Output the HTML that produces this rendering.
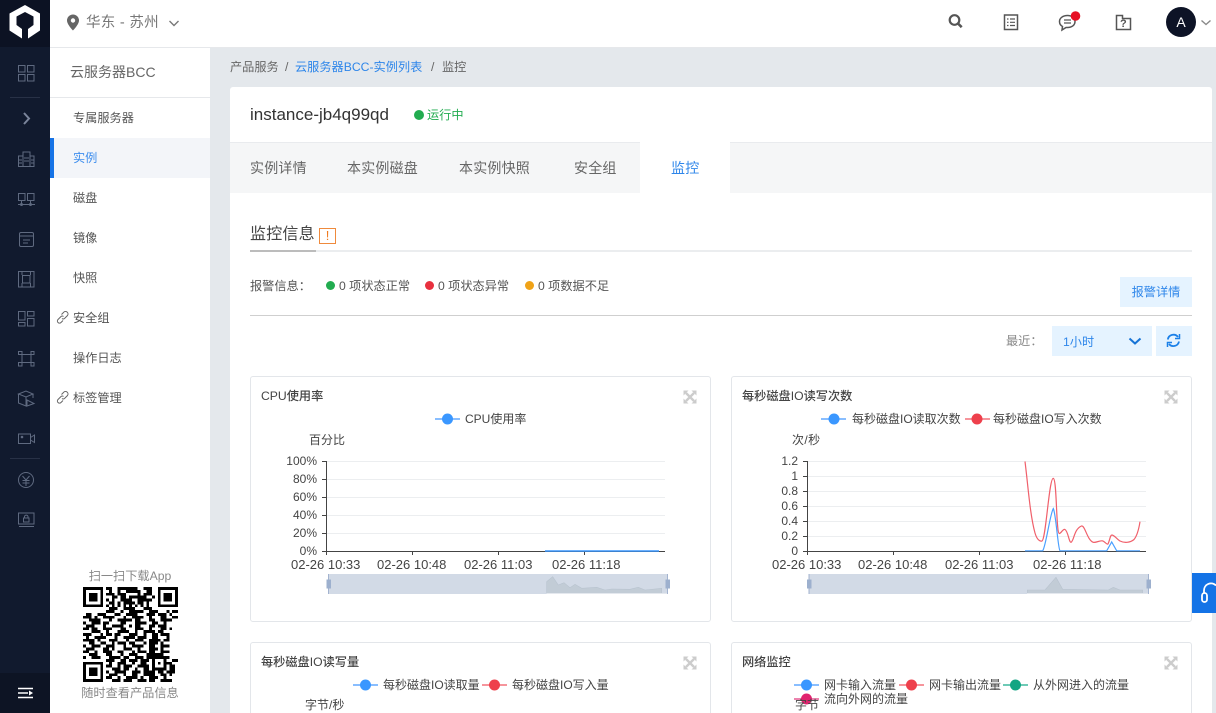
<!DOCTYPE html>
<html lang="zh"><head><meta charset="utf-8"><title>监控</title>
<style>
html,body{margin:0;padding:0;width:1216px;height:713px;overflow:hidden;background:#e4e8ec;font-family:"Liberation Sans","Noto Sans CJK SC",sans-serif;color:#555}
#root{position:absolute;left:0;top:0;width:1216px;height:713px;overflow:hidden;background:#e4e8ec}
.a{position:absolute}
.t{position:absolute;white-space:nowrap;line-height:20px;height:20px}
.m{font-size:12.2px;color:#555}
.card{position:absolute;background:#fff;border:1px solid #e3e6ea;border-radius:3px;box-sizing:border-box}
.ct{font-size:12.2px;color:#444;font-weight:500}
.lg{font-size:12px;color:#444}
.ax{font-size:12px;color:#444}
.ax2{font-size:13px;color:#444}
.tab{font-size:14px;letter-spacing:.2px;color:#666}
</style></head><body><div id="root">
<!-- dark rail -->
<div class="a" style="left:0;top:0;width:50px;height:713px;background:#111a2e"></div>
<div class="a" style="left:0;top:0;width:50px;height:47px;background:#0c1223"></div>
<div class="a" style="left:0;top:673px;width:50px;height:40px;background:#0d1424"></div>
<svg class="a" style="left:0;top:0" width="50" height="713" fill="none" stroke="#5f6a80" stroke-width="1">
<path d="M25 5L40 13.500V30.500L28 38.500V29L33.500 25V16.500L25 12L16.500 16.500V25L22 29V38.500L9.500 30.500V13.500Z" fill="#fff" stroke="none"/>
<path d="M10 97.500H40M10 458.500H40" stroke="#283146"/>
<rect x="18.500" y="65.500" width="6.500" height="6.500"/><rect x="27.500" y="65.500" width="6.500" height="6.500"/><rect x="18.500" y="74.500" width="6.500" height="6.500"/><rect x="27.500" y="74.500" width="6.500" height="6.500"/>
<path d="M24 113l5 5.500-5 5.500" stroke="#7b859b" stroke-width="2"/>
<path d="M18.500 166.500V156H23V152H30V156H34V166.500ZM23 156V166.500M30 156V166.500M19 160H22M19 163H22M24 158H29M24 161H29M31 160H34M31 163H34"/>
<rect x="18.500" y="193.500" width="6.500" height="7"/><rect x="27.500" y="193.500" width="6.500" height="7"/><path d="M21.500 200.500V204M30.500 200.500V204M18 204.500H35" /><circle cx="21.500" cy="204.500" r="1" fill="#5f6a80"/><circle cx="30.500" cy="204.500" r="1" fill="#5f6a80"/>
<rect x="19.500" y="232.500" width="14" height="14" rx="1.500"/><path d="M20 236H33M23 240H30M23 243H28"/>
<rect x="18.500" y="271.500" width="15.500" height="15.500"/><rect x="22.500" y="275.500" width="7.500" height="7.500"/><path d="M22 271.500V275M30.500 271.500V275M22 283V287M30.500 283V287"/>
<rect x="18.500" y="311.500" width="6.500" height="8.500"/><rect x="27.500" y="311.500" width="6.500" height="4.500"/><rect x="18.500" y="322.500" width="6.500" height="3.500"/><rect x="27.500" y="318.500" width="6.500" height="7.500"/>
<path d="M22 354.500H31V362.500H22ZM22 354.500V351.500H18.500V354.500H22M31 354.500V351.500H34V354.500H31M22 362.500V366H18.500V362.500H22M31 362.500V366H34V362.500H31"/>
<path d="M18.500 394L26 391L33 394L26 397ZM18.500 394V403L26 406V397M33 394V398M27 400L34 403.500L27 406Z"/>
<rect x="18.500" y="434" width="12" height="9.500"/><path d="M30.500 437.500L34.500 435V442.500L30.500 440"/><circle cx="22" cy="437" r=".8" fill="#5f6a80"/>
<circle cx="26" cy="480" r="7.500"/><path d="M22.500 476L26 480L29.500 476M22.500 480.500H29.500M22.500 483H29.500M26 480V486"/>
<rect x="18.500" y="513" width="15.500" height="11"/><path d="M19 526.500H34"/><rect x="23.500" y="518" width="5.500" height="4"/><path d="M24.500 518V516.500A1.800 1.800 0 0 1 28 516.500V518"/>
<path d="M18 688.500H33M18 693H28M18 697.500H33" stroke="#fff" stroke-width="1.500"/><path d="M29 690.500L33 693L29 695.500Z" fill="#fff" stroke="none"/>
</svg>
<!-- top bar -->
<div class="a" style="left:50px;top:0;width:1166px;height:47px;background:#fff;border-bottom:1px solid #e6e8eb"></div>
<svg class="a" style="left:66px;top:14px" width="14" height="18"><path d="M7 0.500A6 6 0 0 0 1 6.500C1 10.500 7 16.500 7 16.500S13 10.500 13 6.500A6 6 0 0 0 7 .500Z" fill="#666"/><circle cx="7" cy="6.500" r="2.200" fill="#fff"/></svg>
<div class="t" style="left:86px;top:13px;font-size:14.500px;color:#777;letter-spacing:.3px">华东 - 苏州</div>
<svg class="a" style="left:168px;top:20px" width="12" height="8" fill="none" stroke="#777" stroke-width="1.400"><path d="M1.500 1l4.500 4.500L10.500 1"/></svg>
<svg class="a" style="left:945px;top:10px" width="20" height="20" fill="none" stroke="#555" stroke-width="2.200"><circle cx="9.500" cy="10" r="4.800"/><path d="M13 13.500l3.700 3.700" stroke-width="2.600"/></svg>
<svg class="a" style="left:1003px;top:14px" width="16" height="17" fill="none" stroke="#555" stroke-width="1.500"><rect x="1.500" y="1" width="13" height="14.500"/><path d="M4 5H5.500M7 5H12M4 8.300H5.500M7 8.300H12M4 11.500H5.500M7 11.500H12" stroke-width="1.200"/></svg>
<svg class="a" style="left:1058px;top:10px" width="24" height="22" fill="none" stroke="#555" stroke-width="1.500"><path d="M9.500 5.500C5 5.500 1.500 8 1.500 11.500C1.500 13.700 2.700 15.500 4.500 16.500L4 20L8 17.500C8.500 17.500 9 17.500 9.500 17.500C14 17.500 17 15 17 11.500S14 5.500 9.500 5.500Z"/><path d="M6 10H13M6 13H13" stroke-width="1.200"/><circle cx="17.500" cy="6" r="4.800" fill="#e60f23" stroke="none"/></svg>
<svg class="a" style="left:1115px;top:14px" width="17" height="17" fill="none" stroke="#555" stroke-width="1.500"><path d="M1.500 15.500V1.500H7.500V4.500H15.500V15.500Z"/></svg>
<div class="t" style="left:1120px;top:17px;font-size:11px;font-weight:700;color:#555;line-height:14px;height:14px">?</div>
<div class="a" style="left:1166px;top:7px;width:30px;height:30px;border-radius:50%;background:#0d1326;color:#fff;text-align:center;line-height:30px;font-size:14px">A</div>
<svg class="a" style="left:1200px;top:19px" width="12" height="8" fill="none" stroke="#888" stroke-width="1.400"><path d="M1.500 1.500l4.500 4 4.500-4"/></svg>
<!-- sub menu -->
<div class="a" style="left:50px;top:48px;width:160px;height:665px;background:#fff"></div>
<div class="a" style="left:50px;top:97px;width:160px;height:1px;background:#e6e8eb"></div>
<div class="t" style="left:70px;top:62px;font-size:14px;color:#666">云服务器BCC</div>
<div class="a" style="left:50px;top:138px;width:160px;height:40px;background:#f3f5f9"></div>
<div class="a" style="left:50px;top:138px;width:4px;height:40px;background:#1673e6"></div>
<div class="t m" style="left:73px;top:108px">专属服务器</div>
<div class="t m" style="left:73px;top:148px;color:#3f8fee">实例</div>
<div class="t m" style="left:73px;top:188px">磁盘</div>
<div class="t m" style="left:73px;top:228px">镜像</div>
<div class="t m" style="left:73px;top:268px">快照</div>
<div class="t m" style="left:73px;top:308px">安全组</div>
<div class="t m" style="left:73px;top:348px">操作日志</div>
<div class="t m" style="left:73px;top:388px">标签管理</div>
<svg class="a" style="left:56px;top:311px" width="13" height="13" fill="none" stroke="#666" stroke-width="1"><path d="M5.500 3.500L7.500 1.500A2 2 0 0 1 11.500 4.500L8.500 7.500A2 2 0 0 1 6 7.500M7.500 5.500A2 2 0 0 0 5 5.500L2 8.500A2 2 0 0 0 5 11.500L7 9.500"/></svg>
<svg class="a" style="left:56px;top:391px" width="13" height="13" fill="none" stroke="#666" stroke-width="1"><path d="M5.500 3.500L7.500 1.500A2 2 0 0 1 11.500 4.500L8.500 7.500A2 2 0 0 1 6 7.500M7.500 5.500A2 2 0 0 0 5 5.500L2 8.500A2 2 0 0 0 5 11.500L7 9.500"/></svg>
<div class="t" style="left:50px;width:160px;text-align:center;top:566px;font-size:12.200px;color:#888">扫一扫下载App</div>
<svg class="a" style="left:82.500px;top:587px" width="95" height="95" viewBox="0 0 33 33" shape-rendering="crispEdges">
<rect width="33" height="33" fill="#fff"/>
<g fill="none" stroke="#000" stroke-width="1"><rect x=".5" y=".5" width="6" height="6"/><rect x="26.500" y=".5" width="6" height="6"/><rect x=".5" y="26.500" width="6" height="6"/><rect x="24.500" y="24.500" width="4" height="4"/></g>
<g fill="#000"><rect x="2" y="2" width="3" height="3"/><rect x="28" y="2" width="3" height="3"/><rect x="2" y="28" width="3" height="3"/><rect x="26" y="26" width="1" height="1"/></g>
<path fill="none" stroke="#000" stroke-width="1" d="M8 .5h2m2 0h7m2 0h3M9 1.500h1m2 0h1m2 0h5m2 0h2M8 2.500h3m1 0h3m4 0h1m1 0h3M10 3.500h2m1 0h2m1 0h6m2 0h1M8 4.500h1m1 0h1m2 0h4m2 0h5M9 5.500h2m1 0h1m1 0h4m1 0h2m1 0h1M8 6.500h1m1 0h1m1 0h1m1 0h1m1 0h1m1 0h1m1 0h1m1 0h1M9 7.500h3m2 0h4m3 0h3M8 8.500h3m2 0h1m2 0h5m2 0h3m3 0h1m1 0h2M1 9.500h2m2 0h3m3 0h2m2 0h4m3 0h3m1 0h3m1 0h1M0 10.500h3m1 0h1m2 0h4m3 0h1m2 0h4m2 0h1m3 0h2m2 0h2M2 11.500h4m3 0h1m2 0h5m1 0h2m3 0h2m2 0h4M0 12.500h1m2 0h3m1 0h2m4 0h2m3 0h4m2 0h2m2 0h1M1 13.500h3m3 0h1m2 0h4m2 0h1m1 0h2m3 0h2m1 0h3M0 14.500h2m1 0h2m2 0h3m3 0h2m3 0h3m2 0h1m3 0h2m1 0h1M3 15.500h3m2 0h1m3 0h4m2 0h1m2 0h4m1 0h2M0 16.500h3m3 0h1m1 0h2m1 0h2m3 0h3m2 0h1m2 0h2m1 0h3M1 17.500h1m2 0h4m3 0h1m2 0h4m1 0h3m2 0h2m3 0h1M0 18.500h4m1 0h1m3 0h3m3 0h1m2 0h3m2 0h4m1 0h2M2 19.500h2m2 0h2m2 0h1m1 0h3m1 0h2m3 0h1m1 0h3m1 0h1M0 20.500h1m2 0h3m2 0h3m3 0h1m2 0h4m2 0h2m2 0h3M1 21.500h3m3 0h2m1 0h1m3 0h3m2 0h1m3 0h3m1 0h1M0 22.500h2m2 0h1m2 0h3m2 0h2m3 0h1m1 0h3m1 0h2m2 0h3M2 23.500h3m3 0h2m3 0h1m2 0h3m3 0h6M0 24.500h1m2 0h3m3 0h4m1 0h2m2 0h3m1 0h3m3 0h2M8 25.500h3m2 0h2m1 0h3m1 0h3m5 0h1m2 0h2M9 26.500h1m2 0h3m2 0h1m2 0h2m6 0h3M8 27.500h2m2 0h1m1 0h3m2 0h4m5 0h1m1 0h2M10 28.500h3m1 0h2m2 0h1m2 0h2m7 0h2M8 29.500h1m2 0h4m2 0h3m1 0h4m1 0h2m1 0h3M9 30.500h3m2 0h1m2 0h2m2 0h4m2 0h2m1 0h1M8 31.500h2m2 0h1m2 0h4m1 0h1m2 0h3m2 0h1M10 32.500h3m1 0h3m2 0h3m1 0h2m2 0h4"/>
</svg>
<div class="t" style="left:50px;width:160px;text-align:center;top:683px;font-size:12.200px;color:#888">随时查看产品信息</div>
<!-- breadcrumb -->
<div class="t m" style="left:230px;top:57px;color:#666">产品服务</div>
<div class="t m" style="left:285px;top:57px;color:#666">/</div>
<div class="t m" style="left:295px;top:57px;color:#2e86ea">云服务器BCC-实例列表</div>
<div class="t m" style="left:431px;top:57px;color:#666">/</div>
<div class="t m" style="left:442px;top:57px;color:#666">监控</div>
<!-- main card -->
<div class="a" style="left:230px;top:87px;width:982px;height:626px;background:#fff;border-radius:3px 3px 0 0"></div>
<div class="t" style="left:250px;top:105px;font-size:17px;color:#333">instance-jb4q99qd</div>
<div class="a" style="left:414px;top:110px;width:10px;height:10px;border-radius:50%;background:#22ac50"></div>
<div class="t" style="left:427px;top:105px;font-size:12.200px;color:#22ac50">运行中</div>
<div class="a" style="left:230px;top:142px;width:982px;height:51px;background:#f5f6f7;border-top:1px solid #e9ebee;box-sizing:border-box"></div>
<div class="a" style="left:640px;top:142px;width:90px;height:51px;background:#fff"></div>
<div class="t tab" style="left:250px;top:158px">实例详情</div>
<div class="t tab" style="left:347px;top:158px">本实例磁盘</div>
<div class="t tab" style="left:459px;top:158px">本实例快照</div>
<div class="t tab" style="left:574px;top:158px">安全组</div>
<div class="t tab" style="left:671px;top:158px;color:#2e86ea">监控</div>
<!-- monitor section -->
<div class="t" style="left:250px;top:225px;font-size:16px;letter-spacing:.2px;color:#444">监控信息</div>
<div class="a" style="left:319px;top:228px;width:17px;height:16px;border:1.500px solid #ef8a3c;box-sizing:border-box;color:#ef7a20;font-size:13px;line-height:13px;text-align:center">!</div>
<div class="a" style="left:250px;top:250px;width:942px;height:2px;background:#ebedef"></div>
<div class="a" style="left:250px;top:250px;width:66px;height:2px;background:#bcbcbc"></div>
<div class="t" style="left:250px;top:276px;font-size:12.200px;color:#555">报警信息：</div>
<div class="a" style="left:326px;top:281px;width:9px;height:9px;border-radius:50%;background:#22ac50"></div>
<div class="t" style="left:339px;top:276px;font-size:12.200px;color:#555">0 项状态正常</div>
<div class="a" style="left:425px;top:281px;width:9px;height:9px;border-radius:50%;background:#e8313f"></div>
<div class="t" style="left:438px;top:276px;font-size:12.200px;color:#555">0 项状态异常</div>
<div class="a" style="left:525px;top:281px;width:9px;height:9px;border-radius:50%;background:#f0a318"></div>
<div class="t" style="left:538px;top:276px;font-size:12.200px;color:#555">0 项数据不足</div>
<div class="a" style="left:1120px;top:277px;width:72px;height:30px;background:#e5f3ff;color:#2e86ea;font-size:12.200px;line-height:30px;text-align:center">报警详情</div>
<div class="a" style="left:250px;top:315px;width:942px;height:1px;background:#cfcfcf"></div>
<div class="t" style="left:1006px;top:331px;font-size:12.200px;color:#888">最近：</div>
<div class="a" style="left:1052px;top:326px;width:100px;height:30px;background:#e5f3ff"></div>
<div class="t" style="left:1063px;top:332px;font-size:12.200px;color:#2e86ea">1小时</div>
<svg class="a" style="left:1128px;top:337px" width="14" height="9" fill="none" stroke="#1673d6" stroke-width="2"><path d="M1.500 1.500L7 6.500L12.500 1.500"/></svg>
<div class="a" style="left:1156px;top:326px;width:36px;height:30px;background:#e5f3ff"></div>
<svg class="a" style="left:1166px;top:333px" width="15" height="15" fill="none" stroke="#1b80e8" stroke-width="1.800"><path d="M1.800 6.500A5.700 5.700 0 0 1 12 4M13 8.500A5.700 5.700 0 0 1 3 11"/><path d="M13.500 1V5.500H9M1.500 14V9.500H6" stroke-width="1.500"/></svg>
<!-- cards -->
<div class="card" style="left:250px;top:376px;width:461px;height:246px"></div>
<div class="card" style="left:731px;top:376px;width:461px;height:246px"></div>
<div class="card" style="left:250px;top:642px;width:461px;height:71px;border-bottom:0;border-radius:3px 3px 0 0"></div>
<div class="card" style="left:731px;top:642px;width:461px;height:71px;border-bottom:0;border-radius:3px 3px 0 0"></div>
<div class="t ct" style="left:261px;top:386px">CPU使用率</div>
<div class="t ct" style="left:742px;top:386px">每秒磁盘IO读写次数</div>
<div class="t ct" style="left:261px;top:652px">每秒磁盘IO读写量</div>
<div class="t ct" style="left:742px;top:652px">网络监控</div>
<svg class="a" style="left:0;top:0;pointer-events:none" width="1216" height="713" fill="none">
<defs><g id="ex"><path d="M2.500 2.500L10.500 10.500M10.500 2.500L2.500 10.500" stroke="#ccc" stroke-width="2.400"/><path d="M0 0H5L0 5ZM13 0V5L8 0ZM0 13V8L5 13ZM13 13H8L13 8Z" fill="#ccc"/></g></defs>
<use href="#ex" x="683.500" y="390.500"/><use href="#ex" x="1164.500" y="390.500"/><use href="#ex" x="683.500" y="656.500"/><use href="#ex" x="1164.500" y="656.500"/>
<!-- legends -->
<g stroke-width="1.500">
<path d="M435 419H460M821 419H846M353 685H378M794 685H819" stroke="#62a8ff"/>
<path d="M965 419H990M482 685H507M899 685H924" stroke="#f4727c"/>
<path d="M1003 685H1028" stroke="#3fb89d"/><path d="M794 699H819" stroke="#e65a93"/>
</g>
<g fill="#3a97ff"><circle cx="447.500" cy="419" r="5.500"/><circle cx="834" cy="419" r="5.500"/><circle cx="365.500" cy="685" r="5.500"/><circle cx="806.500" cy="685" r="5.500"/></g>
<g fill="#ee404c"><circle cx="977" cy="419" r="5.500"/><circle cx="494.500" cy="685" r="5.500"/><circle cx="911.500" cy="685" r="5.500"/></g>
<circle cx="1015.500" cy="685" r="5.500" fill="#12a583"/><circle cx="806.500" cy="699" r="5.500" fill="#e0246f"/>
<!-- chart 1 grid -->
<path d="M327 461.500H665M327 479.500H665M327 497.500H665M327 515.500H665M327 533.500H665" stroke="#eceef0"/>
<path d="M326.500 461V555M322 461.500H327M322 479.500H327M322 497.500H327M322 515.500H327M322 533.500H327M322 551.500H665M412.500 551V555M498.500 551V555M584.500 551V555" stroke="#444"/>
<path d="M545 551H659" stroke="#3a97ff" stroke-width="1.500"/>
<rect x="328.500" y="574" width="339" height="20" fill="#d2dae6"/>
<path d="M546.700 593.500V581.700L552.700 576.700L558.300 585L564 582.700L570 587.700L575 584.300L581.700 588.300L596.700 587.300L605 590L611.700 589L630 589.300L638.300 587.300L645 590L661.700 588.300V593.500Z" fill="#c2ccd6" stroke="#b8c3cf" stroke-width=".6"/>
<rect x="546.500" y="593" width="121" height="1" fill="#e4e8ee"/>
<path d="M328.500 574V594M667.500 574V594" stroke="#a3b3cf"/>
<rect x="326.500" y="579.500" width="4.500" height="9" fill="#9db0ce"/><rect x="665.500" y="579.500" width="4.500" height="9" fill="#9db0ce"/>
<!-- chart 2 grid -->
<path d="M808 461.500H1146M808 476.500H1146M808 491.500H1146M808 506.500H1146M808 521.500H1146M808 536.500H1146" stroke="#eceef0"/>
<path d="M807.500 461V555M803 461.500H808M803 476.500H808M803 491.500H808M803 506.500H808M803 521.500H808M803 536.500H808M803 551.500H1146M893.500 551V555M979.500 551V555M1065.500 551V555" stroke="#444"/>
<path d="M1025 461.500C1028 485 1030 515 1035 533C1037 540 1040 541.500 1042 541C1046 539 1049 478 1053.300 478.300C1057 479 1056 533 1059.300 533.500C1061 533.500 1063 528.500 1065 529.500C1068 531 1069 542.500 1071 542.300C1074 541 1074 529 1081.500 526C1085 525 1087 540 1093.300 542.300C1096 543 1100 540 1103 541C1105 542 1107 545 1108 544C1110 540 1110 535 1112 535C1114 535 1118 540 1120 541C1124 543 1130 543 1134 539.500C1137 536 1139 528 1140 521.700" stroke="#f0606b" stroke-width="1.200"/>
<path d="M1025 550.800H1042.700C1046 546 1050 514 1053.300 508.500C1056 514 1058 549 1060 550.800H1106.700L1111.700 542L1116.700 550.800H1140" stroke="#4aa0ff" stroke-width="1.200"/>
<rect x="809" y="574" width="339.500" height="20" fill="#d2dae6"/>
<path d="M1027.300 593.500V590H1045L1056 577.300L1062.700 589.300L1108.300 590L1113.300 587.300L1120 590H1142.700V593.500Z" fill="#c2ccd6" stroke="#b8c3cf" stroke-width=".6"/>
<rect x="1027" y="593" width="121" height="1" fill="#e4e8ee"/>
<path d="M809 574V594M1148.500 574V594" stroke="#a3b3cf"/>
<rect x="807" y="579.500" width="4.500" height="9" fill="#9db0ce"/><rect x="1146.500" y="579.500" width="4.500" height="9" fill="#9db0ce"/>
</svg>
<!-- chart labels -->
<div class="t lg" style="left:465px;top:409px">CPU使用率</div>
<div class="t lg" style="left:852px;top:409px">每秒磁盘IO读取次数</div>
<div class="t lg" style="left:993px;top:409px">每秒磁盘IO写入次数</div>
<div class="t lg" style="left:383px;top:675px">每秒磁盘IO读取量</div>
<div class="t lg" style="left:512px;top:675px">每秒磁盘IO写入量</div>
<div class="t lg" style="left:824px;top:675px">网卡输入流量</div>
<div class="t lg" style="left:929px;top:675px">网卡输出流量</div>
<div class="t lg" style="left:1033px;top:675px">从外网进入的流量</div>
<div class="t lg" style="left:824px;top:689px">流向外网的流量</div>
<div class="t lg" style="left:309px;top:430px">百分比</div>
<div class="t lg" style="left:792px;top:430px;letter-spacing:.4px">次/秒</div>
<div class="t lg" style="left:305px;top:695px">字节/秒</div>
<div class="t lg" style="left:795px;top:695px">字节</div>
<div class="t ax" style="right:899px;top:451px">100%</div>
<div class="t ax" style="right:899px;top:469px">80%</div>
<div class="t ax" style="right:899px;top:487px">60%</div>
<div class="t ax" style="right:899px;top:505px">40%</div>
<div class="t ax" style="right:899px;top:523px">20%</div>
<div class="t ax" style="right:899px;top:541px">0%</div>
<div class="t ax" style="right:418px;top:451px">1.2</div>
<div class="t ax" style="right:418px;top:466px">1</div>
<div class="t ax" style="right:418px;top:481px">0.8</div>
<div class="t ax" style="right:418px;top:496px">0.6</div>
<div class="t ax" style="right:418px;top:511px">0.4</div>
<div class="t ax" style="right:418px;top:526px">0.2</div>
<div class="t ax" style="right:418px;top:541px">0</div>
<div class="t ax2" style="left:291px;top:555px">02-26 10:33</div>
<div class="t ax2" style="left:377px;top:555px">02-26 10:48</div>
<div class="t ax2" style="left:464px;top:555px">02-26 11:03</div>
<div class="t ax2" style="left:552px;top:555px">02-26 11:18</div>
<div class="t ax2" style="left:772px;top:555px">02-26 10:33</div>
<div class="t ax2" style="left:858px;top:555px">02-26 10:48</div>
<div class="t ax2" style="left:945px;top:555px">02-26 11:03</div>
<div class="t ax2" style="left:1033px;top:555px">02-26 11:18</div>
<!-- floating button -->
<div class="a" style="left:1192px;top:573px;width:24px;height:40px;background:#1473e6"></div>
<svg class="a" style="left:1192px;top:573px" width="24" height="40" fill="none" stroke="#fff" stroke-width="1.800"><path d="M12 20V17.500A7 7 0 0 1 24 12.500"/><rect x="10" y="20" width="5" height="9" rx="2.500"/></svg>
</div></body></html>
